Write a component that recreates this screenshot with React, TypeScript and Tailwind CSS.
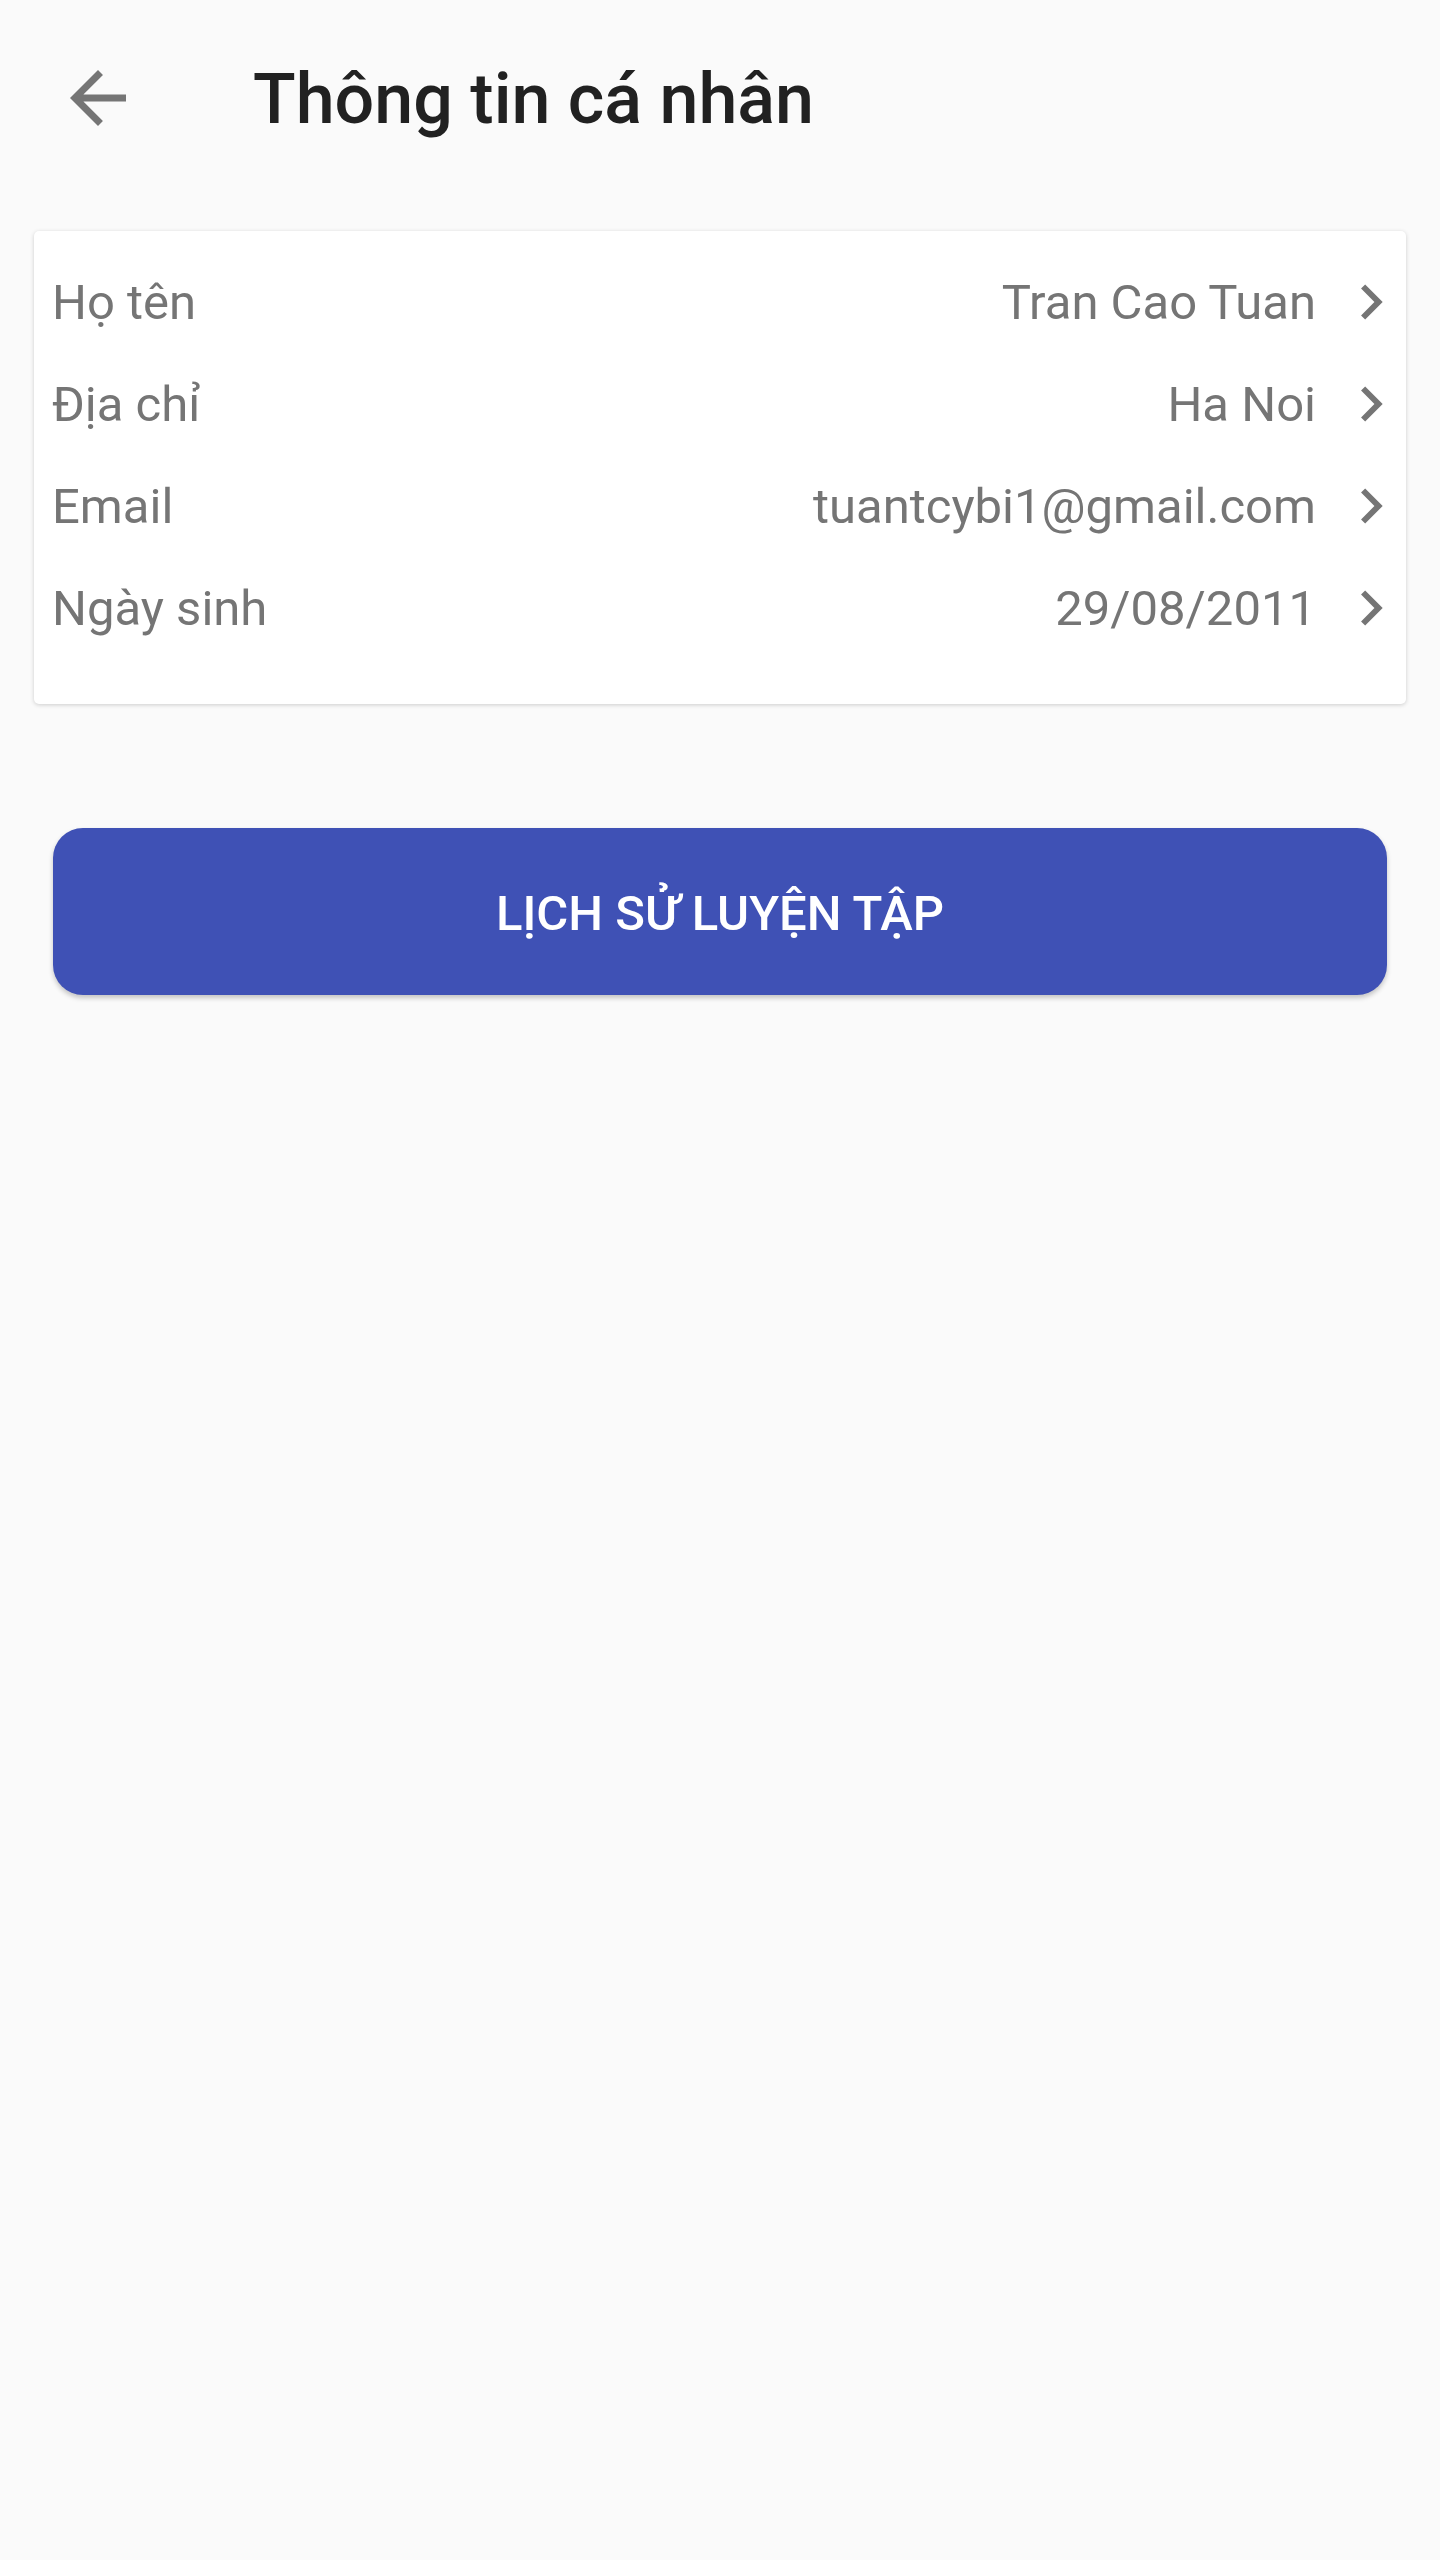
import React from "react";

const rows = [
  { label: "Họ tên", value: "Tran Cao Tuan" },
  { label: "Địa chỉ", value: "Ha Noi" },
  { label: "Email", value: "tuantcybi1@gmail.com" },
  { label: "Ngày sinh", value: "29/08/2011" },
];

function Chevron() {
  return (
    <svg width="70" height="70" viewBox="0 0 24 24" className="shrink-0" fill="#757575">
      <path d="M10 6L8.59 7.41 13.17 12l-4.58 4.59L10 18l6-6z" />
    </svg>
  );
}

function BackArrow() {
  return (
    <svg width="84" height="84" viewBox="0 0 24 24" fill="#757575">
      <path d="M20 11H7.83l5.59-5.59L12 4l-8 8 8 8 1.41-1.41L7.83 13H20v-2z" />
    </svg>
  );
}

export default function App() {
  return (
    <div
      className="w-[1440px] min-h-[2560px] bg-[#fafafa]"
      style={{ fontFamily: "Roboto, 'Noto Sans', sans-serif" }}
    >
      <header className="h-[196px] flex items-center">
        <div className="ml-[56px] w-[84px] h-[84px] flex items-center justify-center">
          <BackArrow />
        </div>
        <h1 className="ml-[113px] pt-[2px] text-[70px] leading-none font-medium text-[#212121]">
          Thông tin cá nhân
        </h1>
      </header>

      <div className="mx-[34px] mt-[35px] bg-white rounded-[5px] shadow-[0_1px_4px_rgba(0,0,0,0.18)] pt-[20px] pb-[45px]">
        {rows.map((r) => (
          <div key={r.label} className="h-[102px] flex items-center pl-[18px]">
            <span className="text-[49px] text-[#757575] leading-none">{r.label}</span>
            <span className="ml-auto text-[49px] text-[#757575] leading-none mr-[20px]">{r.value}</span>
            <Chevron />
          </div>
        ))}
      </div>

      <button className="mt-[124px] ml-[53px] w-[1334px] h-[167px] rounded-[30px] bg-[#3f51b5] shadow-[0_3px_5px_rgba(0,0,0,0.22)] flex items-center justify-center pt-[4px]">
        <span className="text-[49px] font-medium text-white leading-none">LỊCH SỬ LUYỆN TẬP</span>
      </button>
    </div>
  );
}
